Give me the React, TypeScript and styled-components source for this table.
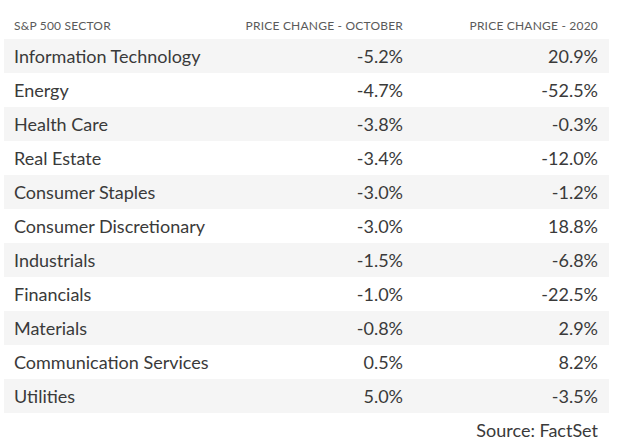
import React from "react";
import styled, { createGlobalStyle } from "styled-components";

const GlobalStyle = createGlobalStyle`
  html, body { margin: 0; padding: 0; background: #ffffff; }
  body { font-family: Lato, "Open Sans", sans-serif; }
`;

const Wrapper = styled.div`
  width: 605px;
  padding: 0 8px 0 4px;
`;

const Table = styled.div`
  display: grid;
  grid-template-columns: 215px 195px 195px;
`;

const HeadCell = styled.div<{ $right?: boolean }>`
  padding: 18px 11px 6px 10px;
  font-size: 12px;
  letter-spacing: 0.2px;
  line-height: 15px;
  color: #5a5a5a;
  text-transform: uppercase;
  text-align: ${(p) => (p.$right ? "right" : "left")};
  white-space: nowrap;
`;

const Row = styled.div<{ $shaded: boolean }>`
  display: contents;
  & > div {
    background: ${(p) => (p.$shaded ? "#f5f5f5" : "transparent")};
  }
`;

const Cell = styled.div<{ $right?: boolean }>`
  height: 34px;
  display: flex;
  align-items: center;
  justify-content: ${(p) => (p.$right ? "flex-end" : "flex-start")};
  padding: 0 11px 0 10px;
  font-size: 18px;
  color: #3a3a3a;
  white-space: nowrap;
`;

const Source = styled.div`
  margin-top: 7px;
  padding-right: 11px;
  text-align: right;
  font-size: 18px;
  line-height: 21px;
  color: #3a3a3a;
`;

const rows: [string, string, string][] = [
  ["Information Technology", "-5.2%", "20.9%"],
  ["Energy", "-4.7%", "-52.5%"],
  ["Health Care", "-3.8%", "-0.3%"],
  ["Real Estate", "-3.4%", "-12.0%"],
  ["Consumer Staples", "-3.0%", "-1.2%"],
  ["Consumer Discretionary", "-3.0%", "18.8%"],
  ["Industrials", "-1.5%", "-6.8%"],
  ["Financials", "-1.0%", "-22.5%"],
  ["Materials", "-0.8%", "2.9%"],
  ["Communication Services", "0.5%", "8.2%"],
  ["Utilities", "5.0%", "-3.5%"],
];

export default function App() {
  return (
    <Wrapper>
      <GlobalStyle />
      <Table>
        <HeadCell>S&amp;P 500 Sector</HeadCell>
        <HeadCell $right>Price Change - October</HeadCell>
        <HeadCell $right>Price Change - 2020</HeadCell>
        {rows.map((r, i) => (
          <Row key={r[0]} $shaded={i % 2 === 0}>
            <Cell>{r[0]}</Cell>
            <Cell $right>{r[1]}</Cell>
            <Cell $right>{r[2]}</Cell>
          </Row>
        ))}
      </Table>
      <Source>Source: FactSet</Source>
    </Wrapper>
  );
}
